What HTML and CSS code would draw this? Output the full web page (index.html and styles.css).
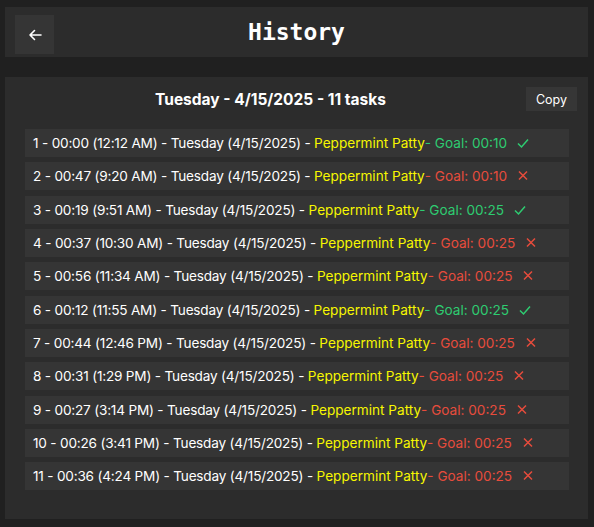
FILE: index.html
```html
<!DOCTYPE html>
<html>
<head>
<meta charset="utf-8">
<link rel="stylesheet" href="styles.css">
</head>
<body>
<div class="page">
  <header class="topbar">
    <button class="back" aria-label="Back">
      <svg width="14" height="12" viewBox="0 0 14 12"><path d="M13 6H2M6.5 1.5L2 6l4.5 4.5" fill="none" stroke="#fff" stroke-width="1.6" stroke-linecap="round" stroke-linejoin="round"/></svg>
    </button>
    <h1 class="title">History</h1>
    <span></span>
  </header>
  <section class="panel">
    <div class="panel-head">
      <h2 class="day">Tuesday - 4/15/2025 - 11 tasks</h2>
      <button class="copy">Copy</button>
    </div>
    <ul class="list">
      <li class="row"><span class="prefix">1 - 00:00 (12:12 AM) - Tuesday (4/15/2025) - </span><span class="name">Peppermint Patty</span><span class="goal ok">- Goal: 00:10</span><svg class="icon" width="14" height="12" viewBox="0 0 14 12"><path d="M2 6.5l3.5 3.5L12 2.5" fill="none" stroke="#2ecc71" stroke-width="1.5"/></svg></li>
      <li class="row"><span class="prefix">2 - 00:47 (9:20 AM) - Tuesday (4/15/2025) - </span><span class="name">Peppermint Patty</span><span class="goal bad">- Goal: 00:10</span><svg class="icon" width="14" height="12" viewBox="0 0 14 12"><path d="M3 1.5l8 8M11 1.5l-8 8" fill="none" stroke="#e74c3c" stroke-width="1.5"/></svg></li>
      <li class="row"><span class="prefix">3 - 00:19 (9:51 AM) - Tuesday (4/15/2025) - </span><span class="name">Peppermint Patty</span><span class="goal ok">- Goal: 00:25</span><svg class="icon" width="14" height="12" viewBox="0 0 14 12"><path d="M2 6.5l3.5 3.5L12 2.5" fill="none" stroke="#2ecc71" stroke-width="1.5"/></svg></li>
      <li class="row"><span class="prefix">4 - 00:37 (10:30 AM) - Tuesday (4/15/2025) - </span><span class="name">Peppermint Patty</span><span class="goal bad">- Goal: 00:25</span><svg class="icon" width="14" height="12" viewBox="0 0 14 12"><path d="M3 1.5l8 8M11 1.5l-8 8" fill="none" stroke="#e74c3c" stroke-width="1.5"/></svg></li>
      <li class="row"><span class="prefix">5 - 00:56 (11:34 AM) - Tuesday (4/15/2025) - </span><span class="name">Peppermint Patty</span><span class="goal bad">- Goal: 00:25</span><svg class="icon" width="14" height="12" viewBox="0 0 14 12"><path d="M3 1.5l8 8M11 1.5l-8 8" fill="none" stroke="#e74c3c" stroke-width="1.5"/></svg></li>
      <li class="row"><span class="prefix">6 - 00:12 (11:55 AM) - Tuesday (4/15/2025) - </span><span class="name">Peppermint Patty</span><span class="goal ok">- Goal: 00:25</span><svg class="icon" width="14" height="12" viewBox="0 0 14 12"><path d="M2 6.5l3.5 3.5L12 2.5" fill="none" stroke="#2ecc71" stroke-width="1.5"/></svg></li>
      <li class="row"><span class="prefix">7 - 00:44 (12:46 PM) - Tuesday (4/15/2025) - </span><span class="name">Peppermint Patty</span><span class="goal bad">- Goal: 00:25</span><svg class="icon" width="14" height="12" viewBox="0 0 14 12"><path d="M3 1.5l8 8M11 1.5l-8 8" fill="none" stroke="#e74c3c" stroke-width="1.5"/></svg></li>
      <li class="row"><span class="prefix">8 - 00:31 (1:29 PM) - Tuesday (4/15/2025) - </span><span class="name">Peppermint Patty</span><span class="goal bad">- Goal: 00:25</span><svg class="icon" width="14" height="12" viewBox="0 0 14 12"><path d="M3 1.5l8 8M11 1.5l-8 8" fill="none" stroke="#e74c3c" stroke-width="1.5"/></svg></li>
      <li class="row"><span class="prefix">9 - 00:27 (3:14 PM) - Tuesday (4/15/2025) - </span><span class="name">Peppermint Patty</span><span class="goal bad">- Goal: 00:25</span><svg class="icon" width="14" height="12" viewBox="0 0 14 12"><path d="M3 1.5l8 8M11 1.5l-8 8" fill="none" stroke="#e74c3c" stroke-width="1.5"/></svg></li>
      <li class="row"><span class="prefix">10 - 00:26 (3:41 PM) - Tuesday (4/15/2025) - </span><span class="name">Peppermint Patty</span><span class="goal bad">- Goal: 00:25</span><svg class="icon" width="14" height="12" viewBox="0 0 14 12"><path d="M3 1.5l8 8M11 1.5l-8 8" fill="none" stroke="#e74c3c" stroke-width="1.5"/></svg></li>
      <li class="row"><span class="prefix">11 - 00:36 (4:24 PM) - Tuesday (4/15/2025) - </span><span class="name">Peppermint Patty</span><span class="goal bad">- Goal: 00:25</span><svg class="icon" width="14" height="12" viewBox="0 0 14 12"><path d="M3 1.5l8 8M11 1.5l-8 8" fill="none" stroke="#e74c3c" stroke-width="1.5"/></svg></li>
    </ul>
  </section>
</div>
</body>
</html>
```
FILE: styles.css
```css
* { box-sizing: border-box; }
html, body { margin: 0; background: #202020; }
body {
  font-family: Inter, "Liberation Sans", sans-serif;
  color: #fff;
}
.page {
  padding: 7px 6px 8px 5px;
  display: flex;
  flex-direction: column;
  gap: 20px;
}
.topbar {
  height: 50px;
  background: #2c2c2c;
  padding: 8px 10px 0 10px;
  display: grid;
  grid-template-columns: 1fr auto 1fr;
  align-items: start;
}
.back {
  width: 39px;
  height: 39px;
  border: 0;
  padding: 0;
  background: #353535;
  display: flex;
  align-items: center;
  justify-content: center;
}
.title {
  margin: 0;
  font-family: "DejaVu Sans Mono", monospace;
  font-weight: bold;
  font-size: 23px;
  line-height: 30px;
  margin-top: 2px;
}
.panel {
  background: #2c2c2c;
  height: 442px;
  padding: 10px 11px 10px 10px;
}
.panel-head {
  display: flex;
  align-items: center;
  height: 24px;
}
.day {
  flex: 1;
  margin: 0;
  text-align: center;
  font-size: 15.5px;
  font-weight: 700;
}
.copy {
  width: 51px;
  height: 24px;
  border: 0;
  padding: 0;
  background: #363636;
  color: #fff;
  font-family: Inter, "Liberation Sans", sans-serif;
  font-size: 12.5px;
}
.list {
  list-style: none;
  margin: 18px 0 0 0;
  padding: 0 8px 0 10px;
  display: flex;
  flex-direction: column;
  gap: 5.33px;
}
.row {
  height: 28px;
  background: #353535;
  padding: 0 8px;
  display: flex;
  align-items: center;
  font-family: Inter, "Liberation Sans", sans-serif;
  font-size: 13.6px;
  white-space: pre;
}
.prefix { letter-spacing: -0.2px; }
.name { color: #f7f700; }
.goal.ok { color: #2ecc71; }
.goal.bad { color: #e74c3c; }
.icon { margin-left: 9px; }
```
